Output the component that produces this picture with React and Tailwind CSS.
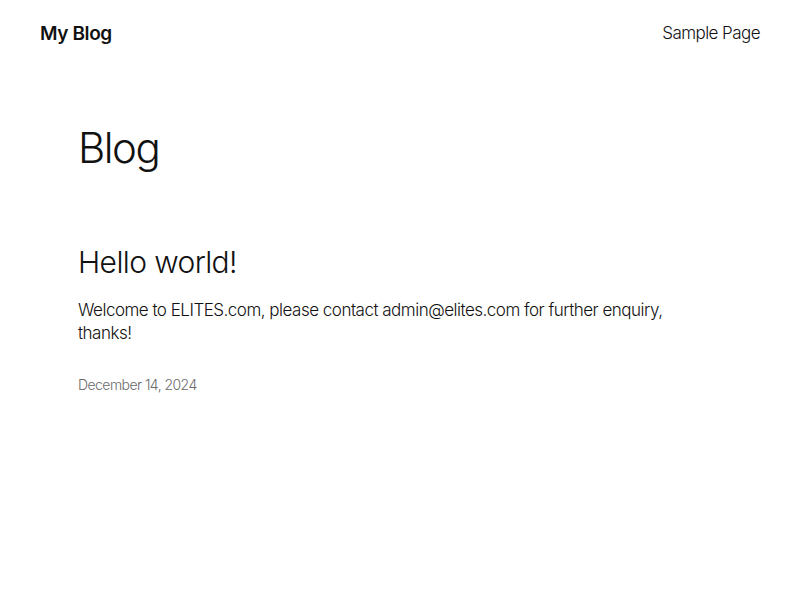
import React from "react";

const App = () => {
  return (
    <div className="min-h-[600px] bg-white text-[#111111] font-['Inter',sans-serif]">
      <header className="flex items-center justify-between px-10 pt-[20px]">
        <a className="text-[19px] font-semibold tracking-[-0.4px]">My Blog</a>
        <nav>
          <a className="text-[17px] font-light tracking-[-0.55px] leading-[24px] -mt-[2px] block">
            Sample Page
          </a>
        </nav>
      </header>

      <main className="pl-[78px]">
        <h1 className="mt-[78px] text-[42px] font-light leading-none tracking-[-1.5px]">
          Blog
        </h1>

        <article className="mt-[75px] w-[620px]">
          <h2 className="text-[30px] font-light leading-tight tracking-[-0.6px]">
            Hello world!
          </h2>
          <p className="mt-[18px] text-[17px] font-light leading-[23px] tracking-[-0.5px]">
            Welcome to ELITES.com, please contact admin@elites.com for further
            enquiry, thanks!
          </p>
          <div className="mt-[29px] text-[14px] font-light tracking-[-0.55px] text-[#6b6b6b]">
            December 14, 2024
          </div>
        </article>
      </main>
    </div>
  );
};

export default App;
